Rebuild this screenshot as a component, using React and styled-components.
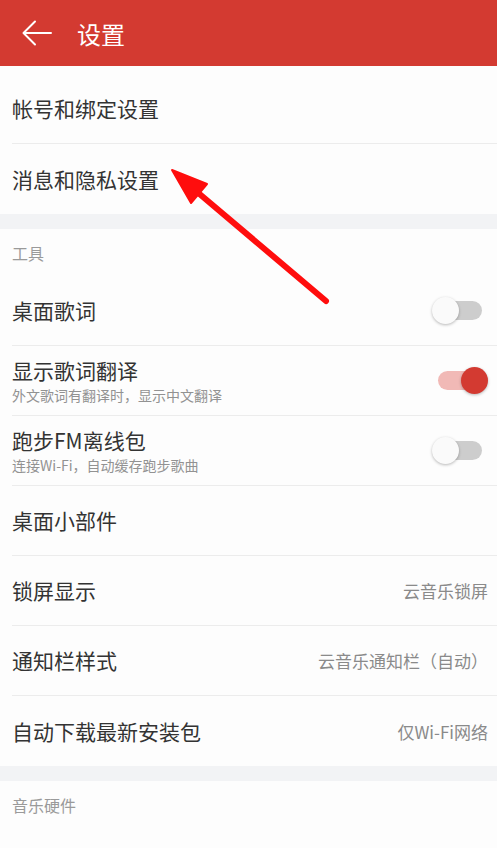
import React from 'react';
import styled, { createGlobalStyle } from 'styled-components';

const GlobalStyle = createGlobalStyle`
  html, body {
    margin: 0;
    padding: 0;
    background: #fdfdfd;
  }
  body {
    font-family: 'Noto Sans CJK SC', 'Noto Sans', sans-serif;
    -webkit-font-smoothing: antialiased;
  }
`;

const Page = styled.div`
  position: relative;
  width: 497px;
  height: 848px;
  overflow: hidden;
  background: #fdfdfd;
`;

const Header = styled.header`
  height: 66px;
  background: #d33a31;
  display: flex;
  align-items: center;
  padding-left: 22px;
  gap: 25px;
  color: #fff;
`;

const HeaderTitle = styled.h1`
  margin: 0;
  font-size: 24px;
  font-weight: 400;
  line-height: 1;
  padding-top: 2px;
`;

const Group = styled.section`
  background: #fdfdfd;
  padding-top: ${(p) => (p.$top ? '8px' : '0')};
`;

const Gap = styled.div`
  height: 15px;
  background: #f2f3f5;
`;

const SectionLabel = styled.div`
  height: 47px;
  display: flex;
  align-items: center;
  padding-left: 12px;
  font-size: 16px;
  color: #9a9a9a;
`;

const Row = styled.div`
  height: 70px;
  margin-left: 12px;
  padding-right: ${(p) => (p.$switch ? '15px' : '9px')};
  display: flex;
  align-items: center;
  justify-content: space-between;
  box-sizing: border-box;
  border-bottom: 1px solid #ececec;
  &:last-child {
    border-bottom: none;
  }
`;

const TextCol = styled.div`
  display: flex;
  flex-direction: column;
  gap: 3px;
`;

const Title = styled.div`
  font-size: 21px;
  color: #333;
  line-height: 1.25;
`;

const Sub = styled.div`
  font-size: 14px;
  color: #929292;
  line-height: 1.3;
`;

const Value = styled.div`
  font-size: 17px;
  color: #8a8a8a;
`;

const Track = styled.div`
  position: relative;
  width: 44px;
  height: 19px;
  border-radius: 10px;
  background: ${(p) => (p.$on ? '#f1b9b6' : '#cdcdcd')};
`;

const Knob = styled.div`
  position: absolute;
  top: 50%;
  left: ${(p) => (p.$on ? '23px' : '-6px')};
  width: 27px;
  height: 27px;
  margin-top: -13.5px;
  border-radius: 50%;
  background: ${(p) => (p.$on ? '#d33a31' : '#fafafa')};
  box-shadow: 0 1px 3px rgba(0, 0, 0, 0.28);
`;

const Pointer = styled.svg`
  position: absolute;
  left: 0;
  top: 0;
  pointer-events: none;
`;

function Switch({ on }) {
  return (
    <Track $on={on}>
      <Knob $on={on} />
    </Track>
  );
}

const tools = [
  { title: '桌面歌词', sw: false },
  { title: '显示歌词翻译', sub: '外文歌词有翻译时，显示中文翻译', sw: true },
  { title: '跑步FM离线包', sub: '连接Wi-Fi，自动缓存跑步歌曲', sw: false },
  { title: '桌面小部件' },
  { title: '锁屏显示', value: '云音乐锁屏' },
  { title: '通知栏样式', value: '云音乐通知栏（自动）' },
  { title: '自动下载最新安装包', value: '仅Wi-Fi网络' },
];

export default function App() {
  return (
    <Page>
      <GlobalStyle />
      <Header>
        <svg width="30" height="26" viewBox="0 0 30 26" fill="none">
          <path d="M29 13H2M13 1.5L1.5 13L13 24.5" stroke="#fff" strokeWidth="2" strokeLinecap="round" strokeLinejoin="round" />
        </svg>
        <HeaderTitle>设置</HeaderTitle>
      </Header>

      <Group $top>
        <Row><Title>帐号和绑定设置</Title></Row>
        <Row><Title>消息和隐私设置</Title></Row>
      </Group>
      <Gap />

      <Group>
        <SectionLabel>工具</SectionLabel>
        {tools.map((t) => (
          <Row key={t.title} $switch={t.sw !== undefined}>
            <TextCol>
              <Title>{t.title}</Title>
              {t.sub && <Sub>{t.sub}</Sub>}
            </TextCol>
            {t.sw !== undefined && <Switch on={t.sw} />}
            {t.value && <Value>{t.value}</Value>}
          </Row>
        ))}
      </Group>
      <Gap />

      <Group>
        <SectionLabel>音乐硬件</SectionLabel>
      </Group>

      <Pointer width="497" height="848" viewBox="0 0 497 848">
        <line x1="326" y1="301" x2="196" y2="191" stroke="#ff0d0d" strokeWidth="6" strokeLinecap="round" />
        <polygon points="172,170 207,184 191,203" fill="#ff0d0d" stroke="#ff0d0d" strokeWidth="2" strokeLinejoin="round" />
      </Pointer>
    </Page>
  );
}
